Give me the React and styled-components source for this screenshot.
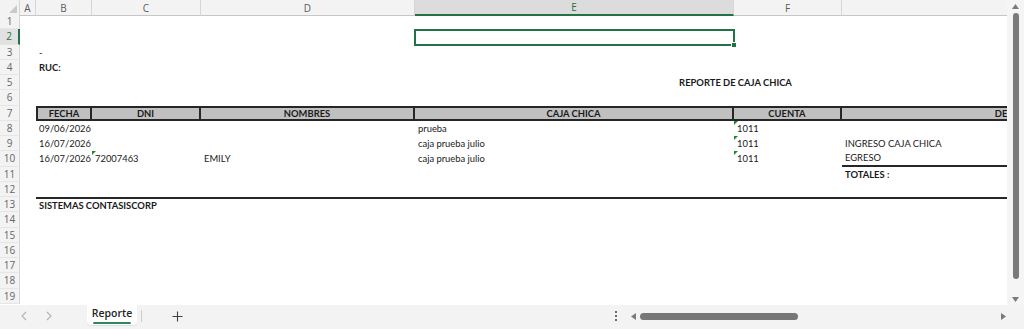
import React from 'react';
import styled, { createGlobalStyle } from 'styled-components';

const GREEN = '#217346';
const INK = '#1a1a1a';
const LINE = '#262626';
const COLS = [16, 56, 109, 214, 319, 108, 370];
const TEMPLATE = `20px ${COLS.map((c) => c + 'px').join(' ')}`;
const LETTERS = ['A', 'B', 'C', 'D', 'E', 'F', ''];

const Global = createGlobalStyle`
  html, body { margin: 0; padding: 0; background: #fff; }
  body { width: 1024px; height: 329px; overflow: hidden; font-family: Lato, "Open Sans", sans-serif; }
`;

const Window = styled.div`
  width: 1024px;
  height: 329px;
  display: flex;
  flex-direction: column;
  overflow: hidden;
  background: #f3f3f3;
`;

const Main = styled.div`
  display: flex;
  height: 305px;
`;

const SheetArea = styled.div`
  flex: 1;
  overflow: hidden;
  background: #fff;
`;

const Row = styled.div`
  display: grid;
  grid-template-columns: ${TEMPLATE};
  height: ${(p) => p.$h || 15.25}px;
  width: max-content;
`;

const Corner = styled.div`
  background: #f3f3f3;
  border-right: 1px solid #d6d6d6;
  border-bottom: 1px solid #c6c6c6;
  box-sizing: border-box;
  display: flex;
  align-items: flex-end;
  justify-content: flex-end;
  padding: 0 2px 2px 0;
`;

const ColHead = styled.div`
  box-sizing: border-box;
  display: flex;
  align-items: center;
  justify-content: center;
  background: ${(p) => (p.$active ? '#dcdcdc' : '#f3f3f3')};
  color: ${(p) => (p.$active ? GREEN : '#5c5c5c')};
  border-right: 1px solid #d6d6d6;
  border-bottom: ${(p) => (p.$active ? `2px solid ${GREEN}` : '1px solid #c6c6c6')};
  font: 400 10px "Open Sans", sans-serif;
`;

const RowNum = styled.div`
  box-sizing: border-box;
  display: flex;
  align-items: center;
  justify-content: center;
  background: ${(p) => (p.$active ? '#e1e1e1' : '#f3f3f3')};
  color: ${(p) => (p.$active ? GREEN : '#666')};
  border-right: ${(p) => (p.$active ? `2px solid ${GREEN}` : '1px solid #d6d6d6')};
  border-bottom: 1px solid #e6e6e6;
  font: 400 10px "Open Sans", sans-serif;
`;

const Cell = styled.div`
  position: relative;
  box-sizing: border-box;
  grid-column: ${(p) => p.$col};
  display: flex;
  align-items: center;
  justify-content: ${(p) => (p.$center ? 'center' : 'flex-start')};
  padding: 0 ${(p) => p.$pr || 3}px 0 3px;
  white-space: nowrap;
  color: ${INK};
  font-size: 9.4px;
  font-weight: ${(p) => (p.$bold ? 700 : 400)};
  border-top: ${(p) => (p.$lineTop ? `2px solid ${LINE}` : 'none')};
  border-bottom: ${(p) => (p.$lineBottom ? `2px solid ${LINE}` : 'none')};
`;

const Selected = styled(Cell)`
  &::before {
    content: '';
    position: absolute;
    inset: 0 -1px -1px -1px;
    border: 2px solid ${GREEN};
  }
  &::after {
    content: '';
    position: absolute;
    right: -3px;
    bottom: -3px;
    width: 4px;
    height: 4px;
    background: ${GREEN};
    border: 1px solid #fff;
  }
`;

const HeadCell = styled(Cell)`
  justify-content: center;
  font-weight: 700;
  background: #c0c0c0;
  border-top: 2px solid ${LINE};
  border-bottom: 2px solid ${LINE};
  border-right: 2px solid ${LINE};
  border-left: ${(p) => (p.$first ? `2px solid ${LINE}` : 'none')};
`;

const TextFlag = styled.span`
  position: absolute;
  top: 0;
  left: 0;
  width: 0;
  height: 0;
  border-top: 4px solid #1e8a2e;
  border-right: 4px solid transparent;
`;

const VScroll = styled.div`
  width: 17px;
  background: #f5f5f5;
  display: flex;
  flex-direction: column;
  align-items: center;
`;

const Arrow = styled.svg`
  display: block;
  flex: none;
  margin: ${(p) => p.$m || '0'};
`;

const VThumb = styled.div`
  width: 6px;
  height: 266px;
  margin-top: 4px;
  border-radius: 3px;
  background: #7a7a7a;
`;

const Spacer = styled.div`
  flex: 1;
`;

const TabBar = styled.div`
  height: 24px;
  display: flex;
  align-items: flex-start;
  background: #f3f3f3;
`;

const Nav = styled.div`
  width: 87px;
  height: 22px;
  box-sizing: border-box;
  padding-left: 11px;
  display: flex;
  align-items: center;
`;

const NavBtn = styled.div`
  width: 25px;
  display: flex;
  justify-content: center;
`;

const SheetTab = styled.div`
  width: 50px;
  height: 20px;
  background: #fff;
  border-radius: 0 0 4px 4px;
  box-shadow: 0 1px 1px rgba(0, 0, 0, 0.08);
  display: flex;
  flex-direction: column;
  align-items: center;
  justify-content: flex-end;
  padding-bottom: 1px;
  box-sizing: border-box;
`;

const TabLabel = styled.span`
  font: 600 10.5px "Open Sans", sans-serif;
  color: #242424;
  line-height: 13px;
`;

const TabUnderline = styled.span`
  width: 38px;
  height: 2px;
  margin-top: 2px;
  border-radius: 1px;
  background: #2e8b57;
`;

const TabSep = styled.div`
  width: 1px;
  height: 12px;
  margin: 5px 0 0 4px;
  background: #cdcdcd;
`;

const AddBtn = styled.div`
  width: 70px;
  height: 22px;
  display: flex;
  align-items: center;
  justify-content: center;
`;

const Dots = styled.div`
  width: 10px;
  height: 22px;
  display: flex;
  flex-direction: column;
  align-items: center;
  justify-content: center;
  gap: 2px;
`;

const Dot = styled.span`
  width: 2px;
  height: 2px;
  background: #6a6a6a;
`;

const HScroll = styled.div`
  width: 390px;
  height: 22px;
  box-sizing: border-box;
  padding: 0 5px 0 10px;
  display: flex;
  align-items: center;
`;

const HTrack = styled.div`
  flex: 1;
  display: flex;
  align-items: center;
  padding-left: 4px;
`;

const HThumb = styled.div`
  width: 158px;
  height: 7px;
  border-radius: 3.5px;
  background: #777;
`;

const RightPad = styled.div`
  width: 13px;
`;

const Flag = () => <TextFlag />;

const rows = [
  { n: 1 },
  { n: 2, selected: true },
  { n: 3, cells: [{ col: '3', text: '-' }] },
  { n: 4, cells: [{ col: '3', text: 'RUC:', bold: true }] },
  { n: 5, cells: [{ col: '6 / 9', text: 'REPORTE DE CAJA CHICA', bold: true, center: true, pr: 159 }] },
  { n: 6 },
  { n: 7, header: ['FECHA', 'DNI', 'NOMBRES', 'CAJA CHICA', 'CUENTA', 'DESCRIPCIÓN'] },
  {
    n: 8,
    cells: [
      { col: '3', text: '09/06/2026' },
      { col: '6', text: 'prueba' },
      { col: '7', text: '1011', flag: true },
    ],
  },
  {
    n: 9,
    cells: [
      { col: '3', text: '16/07/2026' },
      { col: '6', text: 'caja prueba julio' },
      { col: '7', text: '1011', flag: true },
      { col: '8', text: 'INGRESO CAJA CHICA' },
    ],
  },
  {
    n: 10,
    cells: [
      { col: '3', text: '16/07/2026' },
      { col: '4', text: '72007463', flag: true },
      { col: '5', text: 'EMILY' },
      { col: '6', text: 'caja prueba julio' },
      { col: '7', text: '1011', flag: true },
      { col: '8', text: 'EGRESO', lineBottom: true },
    ],
  },
  { n: 11, cells: [{ col: '8', text: 'TOTALES :', bold: true }] },
  { n: 12 },
  { n: 13, cells: [{ col: '3 / 9', text: 'SISTEMAS CONTASISCORP', bold: true, lineTop: true }] },
  { n: 14 },
  { n: 15 },
  { n: 16 },
  { n: 17 },
  { n: 18 },
  { n: 19 },
];

export default function App() {
  return (
    <Window>
      <Global />
      <Main>
        <SheetArea>
          <Row $h={14}>
            <Corner>
              <svg width="8" height="8" viewBox="0 0 8 8">
                <polygon points="8,0 8,8 0,8" fill="#c9c9c9" />
              </svg>
            </Corner>
            {LETTERS.map((l, i) => (
              <ColHead key={i} $active={l === 'E'}>
                {l}
              </ColHead>
            ))}
          </Row>
          {rows.map((r) => (
            <Row key={r.n}>
              <RowNum $active={r.selected}>{r.n}</RowNum>
              {r.selected && <Selected $col="6" />}
              {r.header &&
                r.header.map((h, i) => (
                  <HeadCell key={h} $col={String(i + 3)} $first={i === 0}>
                    {h}
                  </HeadCell>
                ))}
              {r.cells &&
                r.cells.map((c) => (
                  <Cell
                    key={c.col}
                    $col={c.col}
                    $bold={c.bold}
                    $center={c.center}
                    $pr={c.pr}
                    $lineTop={c.lineTop}
                    $lineBottom={c.lineBottom}
                  >
                    {c.flag && <Flag />}
                    {c.text}
                  </Cell>
                ))}
            </Row>
          ))}
        </SheetArea>
        <VScroll>
          <Arrow $m="4px 0 0" width="7" height="5" viewBox="0 0 7 5">
            <polygon points="3.5,0 7,5 0,5" fill="#7a7a7a" />
          </Arrow>
          <VThumb />
          <Spacer />
          <Arrow $m="0 0 3px" width="7" height="5" viewBox="0 0 7 5">
            <polygon points="0,0 7,0 3.5,5" fill="#7a7a7a" />
          </Arrow>
        </VScroll>
      </Main>
      <TabBar>
        <Nav>
          <NavBtn>
            <svg width="6" height="10" viewBox="0 0 6 10">
              <polyline points="5,1 1,5 5,9" fill="none" stroke="#b3b3b3" strokeWidth="1.1" />
            </svg>
          </NavBtn>
          <NavBtn>
            <svg width="6" height="10" viewBox="0 0 6 10">
              <polyline points="1,1 5,5 1,9" fill="none" stroke="#b3b3b3" strokeWidth="1.1" />
            </svg>
          </NavBtn>
        </Nav>
        <SheetTab>
          <TabLabel>Reporte</TabLabel>
          <TabUnderline />
        </SheetTab>
        <TabSep />
        <AddBtn>
          <svg width="11" height="11" viewBox="0 0 11 11">
            <path d="M5.5 0.5v10M0.5 5.5h10" stroke="#404040" strokeWidth="1.1" fill="none" />
          </svg>
        </AddBtn>
        <Spacer />
        <Dots>
          <Dot />
          <Dot />
          <Dot />
        </Dots>
        <HScroll>
          <Arrow width="5" height="7" viewBox="0 0 5 7">
            <polygon points="5,0 5,7 0,3.5" fill="#7a7a7a" />
          </Arrow>
          <HTrack>
            <HThumb />
            <Spacer />
          </HTrack>
          <Arrow width="5" height="7" viewBox="0 0 5 7">
            <polygon points="0,0 5,3.5 0,7" fill="#7a7a7a" />
          </Arrow>
        </HScroll>
        <RightPad />
      </TabBar>
    </Window>
  );
}
